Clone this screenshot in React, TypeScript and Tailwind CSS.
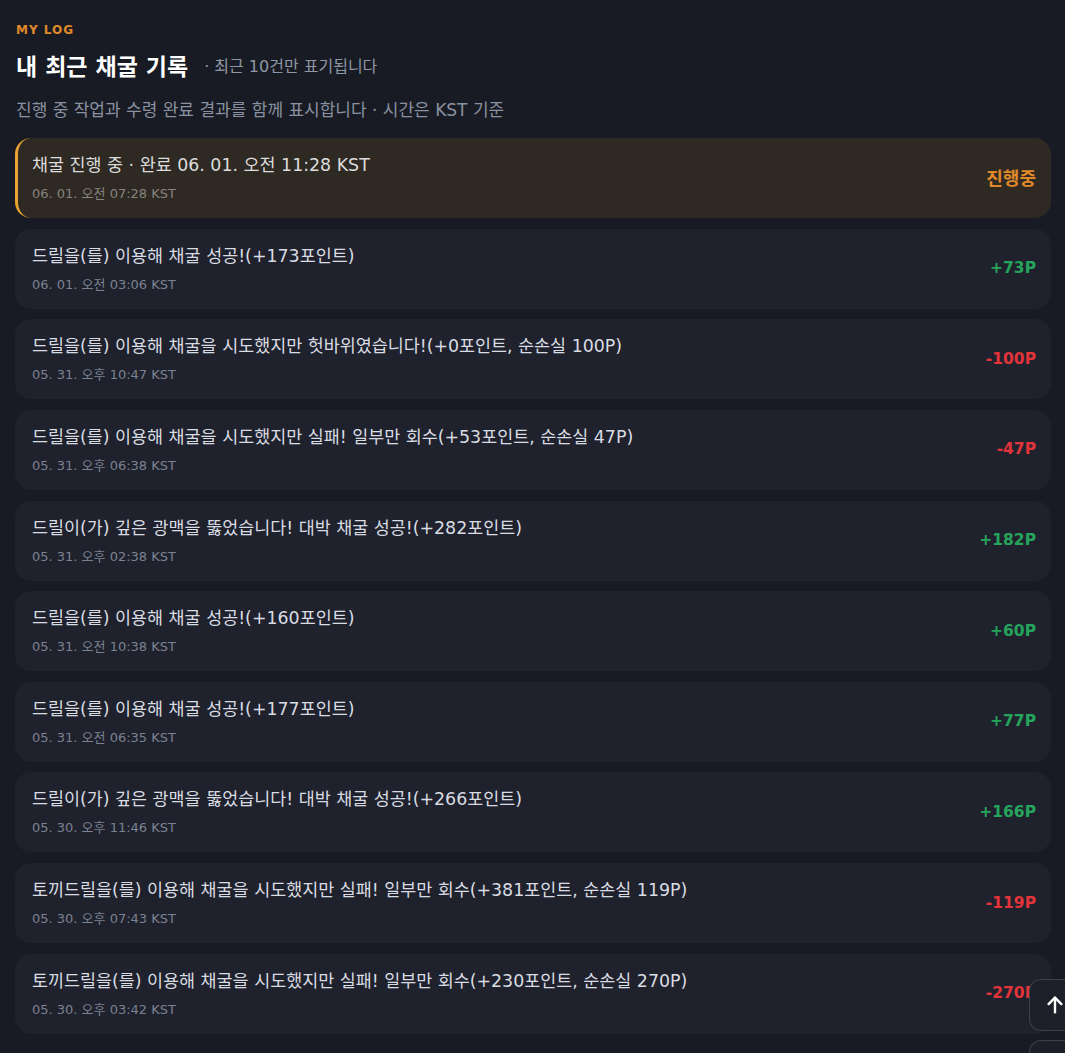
import React from "react";

type Row = { title: string; time: string; value: string; kind: "pos" | "neg" };

const rows: Row[] = [
  { title: "드릴을(를) 이용해 채굴 성공!(+173포인트)", time: "06. 01. 오전 03:06 KST", value: "+73P", kind: "pos" },
  { title: "드릴을(를) 이용해 채굴을 시도했지만 헛바위였습니다!(+0포인트, 순손실 100P)", time: "05. 31. 오후 10:47 KST", value: "-100P", kind: "neg" },
  { title: "드릴을(를) 이용해 채굴을 시도했지만 실패! 일부만 회수(+53포인트, 순손실 47P)", time: "05. 31. 오후 06:38 KST", value: "-47P", kind: "neg" },
  { title: "드릴이(가) 깊은 광맥을 뚫었습니다! 대박 채굴 성공!(+282포인트)", time: "05. 31. 오후 02:38 KST", value: "+182P", kind: "pos" },
  { title: "드릴을(를) 이용해 채굴 성공!(+160포인트)", time: "05. 31. 오전 10:38 KST", value: "+60P", kind: "pos" },
  { title: "드릴을(를) 이용해 채굴 성공!(+177포인트)", time: "05. 31. 오전 06:35 KST", value: "+77P", kind: "pos" },
  { title: "드릴이(가) 깊은 광맥을 뚫었습니다! 대박 채굴 성공!(+266포인트)", time: "05. 30. 오후 11:46 KST", value: "+166P", kind: "pos" },
  { title: "토끼드릴을(를) 이용해 채굴을 시도했지만 실패! 일부만 회수(+381포인트, 순손실 119P)", time: "05. 30. 오후 07:43 KST", value: "-119P", kind: "neg" },
  { title: "토끼드릴을(를) 이용해 채굴을 시도했지만 실패! 일부만 회수(+230포인트, 순손실 270P)", time: "05. 30. 오후 03:42 KST", value: "-270P", kind: "neg" },
];

const font = { fontFamily: '"DejaVu Sans", "Noto Sans CJK KR", sans-serif' };

export default function App() {
  return (
    <div className="min-h-[1053px] w-full bg-[#181b23] text-[#d9dce2]" style={font}>
      <div className="pl-[15px] pr-[14px] pt-[22px] pb-[20px]">
        <div className="pl-px text-[12px] font-bold tracking-[1px] text-[#e0892a] leading-[16px]">MY LOG</div>
        <div className="mt-[14px] flex items-center pl-px">
          <h1 className="text-[23px] font-bold leading-[30px] text-white">내 최근 채굴 기록</h1>
          <span className="ml-[16px] text-[16px] text-[#8f96a5] leading-[22px]">· 최근 10건만 표기됩니다</span>
        </div>
        <p className="mt-[16px] pl-px text-[17px] leading-[24px] text-[#8a91a0]">
          진행 중 작업과 수령 완료 결과를 함께 표시합니다 · 시간은 KST 기준
        </p>
        <div className="mt-[16px] flex flex-col gap-[10.65px]">
          <div className="flex h-[80px] items-center justify-between rounded-2xl border-l-[3px] border-[#e8a333] bg-[#2e2923] pl-[14px] pr-[15px]">
            <div className="flex flex-col">
              <div className="text-[17.4px] leading-[24px] text-[#dcdcdc]">채굴 진행 중 · 완료 06. 01. 오전 11:28 KST</div>
              <div className="mt-[8px] text-[13px] leading-[18px] text-[#86847f]">06. 01. 오전 07:28 KST</div>
            </div>
            <div className="text-[18px] font-bold text-[#e0892a]">진행중</div>
          </div>
          {rows.map((r, i) => (
            <div key={i} className="flex h-[80px] items-center justify-between rounded-2xl bg-[#1f222d] pl-[17px] pr-[15px]">
              <div className="flex flex-col">
                <div className="text-[17.4px] leading-[24px] text-[#d9dce2]">{r.title}</div>
                <div className="mt-[8px] text-[13px] leading-[18px] text-[#7b8190]">{r.time}</div>
              </div>
              <div className={"text-[15.5px] font-bold " + (r.kind === "pos" ? "text-[#25a55b]" : "text-[#e3343a]")}>{r.value}</div>
            </div>
          ))}
        </div>
      </div>
      <button className="fixed left-[1029px] top-[979px] flex h-[52px] w-[52px] items-center justify-center rounded-xl border border-white/15 bg-[#1d2029]">
        <svg width="22" height="22" viewBox="0 0 24 24" fill="none" stroke="white" strokeWidth="2.6" strokeLinecap="round" strokeLinejoin="round">
          <path d="M12 20V4" />
          <path d="M5 11l7-7 7 7" />
        </svg>
      </button>
      <div className="fixed left-[1029px] top-[1040px] h-[52px] w-[52px] rounded-xl border border-white/15 bg-[#1d2029]" />
    </div>
  );
}
